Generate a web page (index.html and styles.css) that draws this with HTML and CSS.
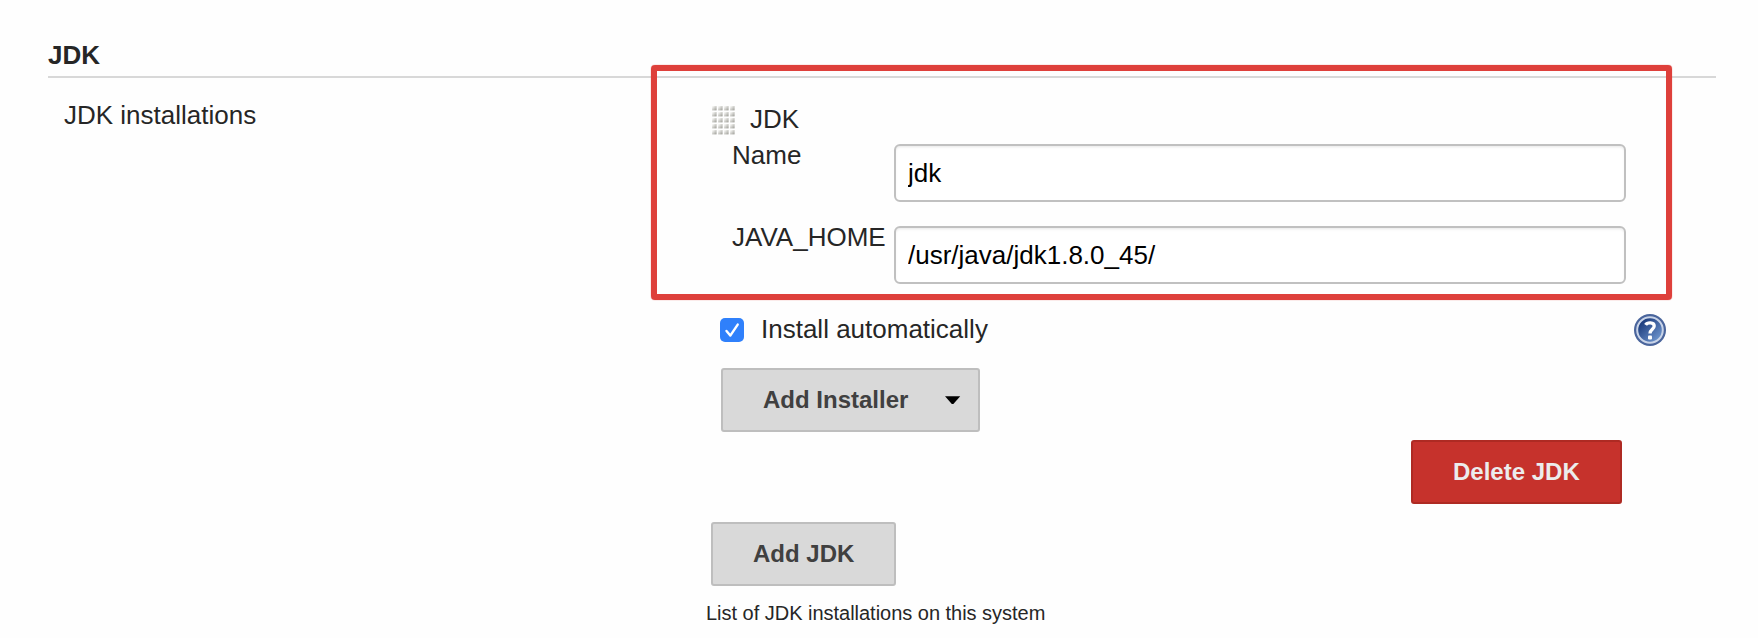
FILE: index.html
```html
<!DOCTYPE html>
<html lang="en">
<head>
<meta charset="utf-8">
<title>JDK</title>
<link rel="stylesheet" href="styles.css">
</head>
<body>
<main class="page">
  <h2 class="section-title">JDK</h2>
  <div class="section-body">
    <div class="section-label">JDK installations</div>
    <div class="content">
      <div class="item-head">
        <svg class="grip" width="24" height="30" viewBox="0 0 24 30">
          <defs>
            <linearGradient id="dot" x1="0" y1="0" x2="1" y2="1">
              <stop offset="0.15" stop-color="#f4f4f2"/>
              <stop offset="0.9" stop-color="#a4a49e"/>
            </linearGradient>
            <pattern id="dots" width="6" height="6" patternUnits="userSpaceOnUse">
              <rect width="4.6" height="4.4" fill="url(#dot)"/>
            </pattern>
          </defs>
          <rect width="24" height="30" fill="url(#dots)"/>
        </svg>
        <span>JDK</span>
      </div>
      <div class="field">
        <label for="name">Name</label>
        <input id="name" type="text" value="jdk">
      </div>
      <div class="field">
        <label for="home">JAVA_HOME</label>
        <input id="home" type="text" value="/usr/java/jdk1.8.0_45/">
      </div>
      <div class="auto-row">
        <svg class="check" width="24" height="24" viewBox="0 0 24 24">
          <rect width="24" height="24" rx="5" fill="#2f80fb"/>
          <path d="M6.5 13 10.3 17.6 17.7 6.6" fill="none" stroke="#fff" stroke-width="2.4" stroke-linecap="round" stroke-linejoin="round"/>
        </svg>
        <span>Install automatically</span>
        <svg class="help" width="32" height="32" viewBox="0 0 32 32">
          <defs>
            <linearGradient id="ball" x1="0" y1="0" x2="1" y2="1">
              <stop offset="0.2" stop-color="#1f3f80"/>
              <stop offset="0.85" stop-color="#6c93cb"/>
            </linearGradient>
          </defs>
          <circle cx="16" cy="16" r="16" fill="#4a659c"/>
          <circle cx="16" cy="16" r="12.8" fill="url(#ball)" stroke="#c9d4e8" stroke-width="2"/>
          <path d="M11.6 10.8C13.2 8.2 20.2 7.8 20.2 12 20.2 15.2 16 15.4 16 19.6" fill="none" stroke="#fff" stroke-width="3.3"/>
          <rect x="14" y="21.6" width="4" height="4" rx="1" fill="#fff"/>
        </svg>
      </div>
      <button class="btn btn-menu">Add Installer
        <svg width="16" height="9" viewBox="0 0 16 9"><path d="M0 .3H15.2L8.4 8H6.8Z" fill="#000"/></svg>
      </button>
      <button class="btn btn-danger">Delete JDK</button>
      <button class="btn btn-add">Add JDK</button>
      <p class="hint">List of JDK installations on this system</p>
    </div>
  </div>
  <div class="highlight"></div>
</main>
</body>
</html>
```
FILE: styles.css
```css
* { box-sizing: border-box; }
body {
  margin: 0;
  background: #fefefe;
  color: #262626;
  font: 26px/30px "Liberation Sans", Arial, sans-serif;
}
.page {
  position: relative;
  height: 638px;
  padding: 40px 42px 0 48px;
  overflow: hidden;
}
.section-title {
  margin: 0;
  height: 38px;
  font-size: 26px;
  border-bottom: 2px solid #d8d8d8;
}
.section-body {
  display: grid;
  grid-template-columns: 658px 960px;
}
.section-label { padding: 22px 0 0 16px; }
.content {
  display: flex;
  flex-direction: column;
  align-items: flex-start;
}
.item-head {
  display: flex;
  padding: 26px 0 0 6px;
  margin-bottom: 6px;
}
.grip { margin: 2px 14px -2px 0; }
.field {
  display: grid;
  grid-template-columns: 162px 732px;
  height: 82px;
  padding-left: 26px;
}
.field input {
  width: 732px;
  height: 58px;
  margin: 4px 0 0;
  padding: 0 12px;
  border: 2px solid #c0c0c0;
  border-radius: 6px;
  background: #fff;
  box-shadow: inset 0 2px 3px -1px rgba(0, 0, 0, .1);
  color: #000;
  font: inherit;
}
.auto-row {
  display: flex;
  align-items: center;
  width: 960px;
  height: 32px;
  margin-top: 10px;
  padding-left: 14px;
}
.check { margin-right: 17px; }
.auto-row span { padding-bottom: 2px; }
.help { margin-left: auto; }
.btn {
  display: flex;
  align-items: center;
  height: 64px;
  margin: 0;
  padding: 0 0 0 40px;
  border: 2px solid #bebebe;
  border-radius: 3px;
  background: #d9d9d9;
  color: #404040;
  font: bold 24px/28px "Liberation Sans", Arial, sans-serif;
}
.btn-menu {
  width: 259px;
  margin: 22px 0 0 15px;
}
.btn-menu svg { margin-left: 37px; }
.btn-danger {
  width: 211px;
  margin: 8px 0 0 705px;
  border-color: #ae2a23;
  background: #c6322c;
  color: #ececec;
}
.btn-add {
  width: 185px;
  margin: 18px 0 0 5px;
}
.hint {
  margin: 15px 0 0;
  font-size: 20px;
  line-height: 24px;
  letter-spacing: -.02px;
}
.highlight {
  position: absolute;
  left: 651px;
  top: 64.5px;
  width: 1021px;
  height: 235.5px;
  border: 6px solid #de403b;
  border-radius: 4px;
  box-shadow: 0 0 1px #de403b;
  pointer-events: none;
}
```
